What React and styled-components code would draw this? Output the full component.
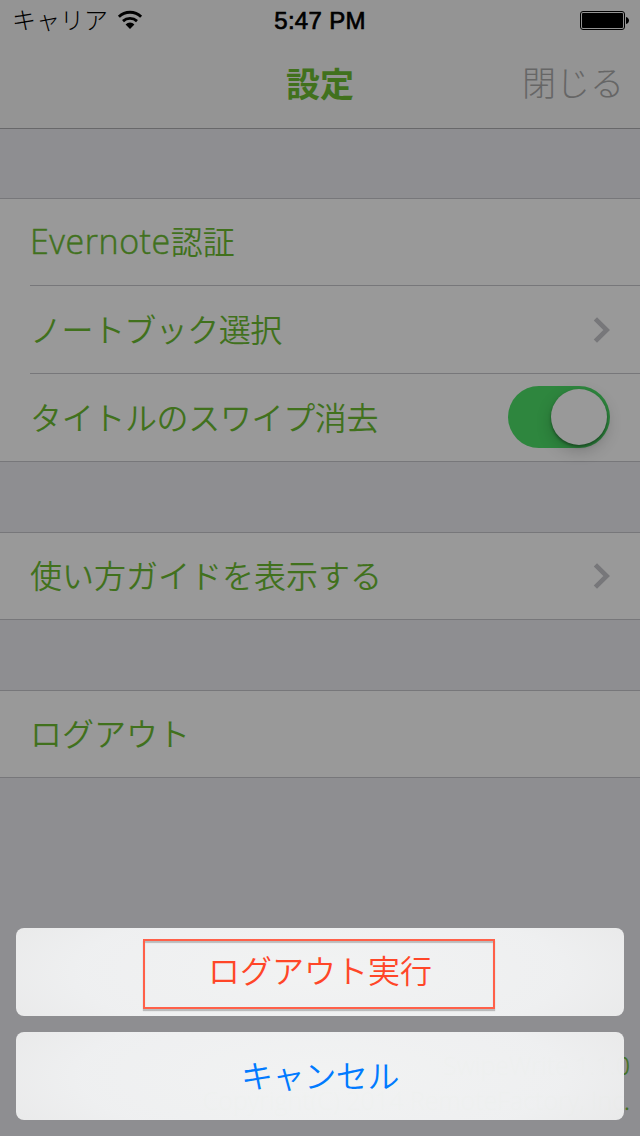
import styled, { createGlobalStyle } from 'styled-components';

const groups = [
  [
    { latin: 'Evernote', label: '認証', height: 86 },
    { label: 'ノートブック選択', chevron: true, tracking: '-0.55px' },
    { label: 'タイトルのスワイプ消去', toggle: true, tracking: '-0.35px' },
  ],
  [{ label: '使い方ガイドを表示する', chevron: true, height: 86 }],
  [{ label: 'ログアウト', height: 86 }],
];

const Wifi = () => (
  <svg width='26' height='20' viewBox='0 0 26 20' fill='none' stroke='#000'>
    <path d='M1.9 6.7a16 16 0 0 1 22.2 0' strokeWidth='2.9' />
    <path d='M6 11.1a10.4 10.4 0 0 1 14 0' strokeWidth='2.8' />
    <path d='M8.6 14.4a6.3 6.3 0 0 1 8.8 0L13 19z' fill='#000' stroke='none' />
  </svg>
);

const Battery = () => (
  <svg width='50' height='20' viewBox='0 0 50 20'>
    <rect x='0.5' y='0.5' width='44' height='18' rx='2.5' fill='none' stroke='#000' />
    <rect x='2' y='2' width='41' height='15' rx='1' />
    <path d='M46 6c4 1 4 6 0 7z' />
  </svg>
);

const Chevron = () => (
  <svg width='17' height='26' viewBox='0 0 17 26' fill='none' stroke='#77777a' strokeWidth='4.6'>
    <path d='M2.4 1.8L13.7 13 2.4 24.2' />
  </svg>
);

const App = () => (
  <>
    <GlobalStyle />
    <Screen>
      <StatusBar>
        <Carrier>
          <span>キャリア</span>
          <Wifi />
        </Carrier>
        <Time>5:47 PM</Time>
        <Power>
          <Battery />
        </Power>
      </StatusBar>
      <NavBar>
        <Title>設定</Title>
        <Close>閉じる</Close>
      </NavBar>
      {groups.map((rows, i) => (
        <Group key={i}>
          {rows.map((row) => (
            <Row key={row.label} $height={row.height}>
              <Label $tracking={row.tracking}>
                {row.latin && <Latin>{row.latin}</Latin>}
                {row.label}
              </Label>
              {row.chevron && <Chevron />}
              {row.toggle && (
                <Switch>
                  <Knob />
                </Switch>
              )}
            </Row>
          ))}
        </Group>
      ))}
      <Footer>
        SwipeWrite 1.1.0
        <br />
        Copyright(C) 2014 RemoteFactory, Inc.
      </Footer>
      <ActionSheet>
        <Action $danger>
          <Outline>ログアウト実行</Outline>
        </Action>
        <Action>キャンセル</Action>
      </ActionSheet>
    </Screen>
  </>
);

export default App;

const GlobalStyle = createGlobalStyle`
  body {
    margin: 0;
  }
`;

const Screen = styled.main`
  position: relative;
  width: 640px;
  height: 1136px;
  overflow: hidden;
  background: #8e8e91;
  color: #41711d;
  font-family: 'Noto Sans CJK JP', sans-serif;
`;

const StatusBar = styled.div`
  display: grid;
  grid-template-columns: 1fr auto 1fr;
  align-items: center;
  height: 40px;
  background: #949494;
  color: #000;
`;

const Carrier = styled.div`
  display: flex;
  align-items: center;
  gap: 9px;
  padding-left: 12px;
  font: 300 24px/38px 'Noto Sans CJK JP', sans-serif;

  span {
    padding-bottom: 2px;
  }
`;

const Time = styled.div`
  padding-top: 2px;
  font: 400 24px/38px 'Liberation Sans', sans-serif;
  letter-spacing: 0.3px;
  -webkit-text-stroke: 0.7px #000;
`;

const Power = styled.div`
  display: flex;
  justify-content: flex-end;
  padding: 2px 10px 0 0;
`;

const NavBar = styled.header`
  display: grid;
  grid-template-columns: 1fr auto 1fr;
  box-sizing: border-box;
  height: 89px;
  border-bottom: 1px solid #68686a;
  background: #949494;
`;

const Title = styled.h1`
  grid-column: 2;
  margin: 0;
  font: 700 34px/86px 'Noto Sans CJK JP', sans-serif;
`;

const Close = styled.span`
  padding-right: 16px;
  color: #666;
  font: 300 34px/84px 'Noto Sans CJK JP', sans-serif;
  text-align: right;
`;

const Group = styled.section`
  margin-top: 69px;
  border: solid #77777a;
  border-width: 1px 0;
  background: #999;

  & + & {
    margin-top: 70px;
  }
`;

const Row = styled.div`
  display: flex;
  align-items: center;
  justify-content: space-between;
  height: ${({ $height }) => $height || 87}px;
  margin-left: 30px;
  padding-right: 30px;

  & + & {
    border-top: 1px solid #77777a;
  }
`;

const Label = styled.span`
  padding-bottom: 4px;
  font: 350 32px/82px 'Noto Sans CJK JP', sans-serif;
  letter-spacing: ${({ $tracking }) => $tracking || 0};
`;

const Latin = styled.span`
  font: 300 34px/1 'Open Sans', sans-serif;
  letter-spacing: 0.55px;
  -webkit-text-stroke: 0.5px;
`;

const Switch = styled.div`
  display: flex;
  justify-content: flex-end;
  box-sizing: border-box;
  width: 102px;
  height: 62px;
  margin-bottom: 1px;
  padding: 3px;
  border-radius: 31px;
  background: #2e863e;
`;

const Knob = styled.div`
  width: 56px;
  height: 56px;
  border-radius: 50%;
  background: #999;
  box-shadow: 0 6px 16px rgba(0, 0, 0, 0.2), 0 2px 3px rgba(0, 0, 0, 0.35);
`;

const Footer = styled.footer`
  position: absolute;
  right: 10px;
  bottom: 18px;
  font: 300 25px/35px 'Open Sans', sans-serif;
  text-align: right;
  white-space: nowrap;
  -webkit-text-stroke: 0.4px;
`;

const ActionSheet = styled.div`
  position: absolute;
  right: 16px;
  bottom: 16px;
  left: 16px;
  display: grid;
  gap: 16px;
`;

const Action = styled.div`
  display: flex;
  justify-content: center;
  height: 88px;
  border-radius: 8px;
  background: radial-gradient(
    ellipse 66% 130% at 50% 50%,
    rgba(243, 244, 244, 0.985) 0%,
    rgba(240, 241, 242, 0.985) 60%,
    rgba(232, 232, 232, 0.985) 100%
  );
  color: ${({ $danger }) => ($danger ? '#ff4628' : '#007aff')};
  font: 350 32px/84px 'Noto Sans CJK JP', sans-serif;
  letter-spacing: ${({ $danger }) => ($danger ? '0' : '-0.4px')};
`;

const Outline = styled.span`
  box-sizing: border-box;
  width: 352px;
  height: 70px;
  margin: 11px 2px 0 0;
  padding-left: 2px;
  border: 2px solid #ff6049;
  line-height: 57px;
  text-align: center;
  box-shadow: 0 2px 1px rgba(0, 0, 0, 0.22), inset 0 2px 1px rgba(0, 0, 0, 0.22);
`;
